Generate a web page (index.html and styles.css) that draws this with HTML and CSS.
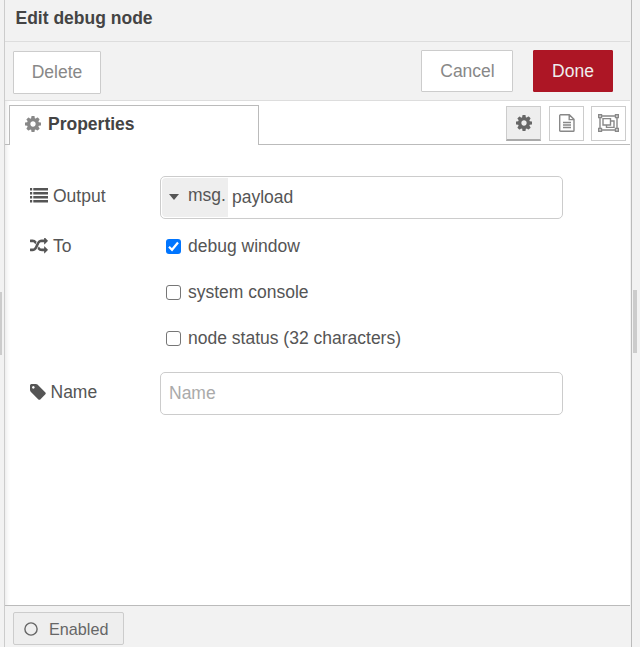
FILE: index.html
```html
<!DOCTYPE html>
<html lang="en">
<head>
<meta charset="utf-8">
<title>Edit debug node</title>
<link rel="stylesheet" href="styles.css">
</head>
<body>
<svg width="0" height="0" class="defs">
  <symbol id="cog" viewBox="128 128 1536 1536"><path d="M1152 896q0-106-75-181t-181-75-181 75-75 181 75 181 181 75 181-75 75-181zm512-109v222q0 12-8 23t-20 13l-185 28q-19 54-39 91 35 50 107 138 10 12 10 25t-9 23q-27 37-99 108t-94 71q-12 0-26-9l-138-108q-44 23-91 38-16 136-29 186-7 28-36 28h-222q-14 0-24.500-8.500t-11.500-21.500l-28-184q-49-16-90-37l-141 107q-10 9-25 9-14 0-25-11-126-114-165-168-7-10-7-23 0-12 8-23 15-21 51-66.500t54-70.500q-27-50-41-99l-183-27q-13-2-21-12.500t-8-23.500v-222q0-12 8-23t19-13l186-28q14-46 39-92-40-57-107-138-10-12-10-24 0-10 9-23 26-36 98.500-107.500t94.500-71.500q13 0 26 10l138 107q44-23 91-38 16-136 29-186 7-28 36-28h222q14 0 24.500 8.500t11.500 21.500l28 184q49 16 90 37l142-107q9-9 24-9 13 0 25 10 129 119 165 170 7 8 7 22 0 12-8 23-15 21-51 66.500t-54 70.500q26 50 41 98l183 28q13 2 21 12.500t8 23.500z"/></symbol>
</svg>
<div class="workspace">
  <div class="gutter gutter-left"><div class="grip"></div></div>
  <div class="tray">
    <div class="title">Edit debug node</div>
    <div class="toolbar">
      <button class="btn btn-delete">Delete</button>
      <button class="btn btn-cancel">Cancel</button>
      <button class="btn btn-done">Done</button>
    </div>
    <div class="tabs">
      <div class="tab"><svg class="tab-icon"><use href="#cog"/></svg>Properties</div>
      <div class="tab-buttons">
        <div class="tab-btn active"><svg width="16" height="16"><use href="#cog"/></svg></div>
        <div class="tab-btn"><svg class="outline" width="16" height="18" viewBox="0 0 16 18"><path d="M1.100.7H10.300L15 5.400V16.400Q15 17.300 14.300 17.300H1.700Q.7 17.300.7 16.400V1.500Q.7.700 1.700.700ZM10.200.8V5.600H15M4 8.500H12M4 11H12M4 13.500H12"/></svg></div>
        <div class="tab-btn"><svg class="outline" width="21" height="18" viewBox="0 0 21 18"><path d="M4 2H17M4 16H17M2 4V14M19 4V14M.7.700H3.500V3.500H.7ZM17.500.700H20.300V3.500H17.500ZM.7 14.500H3.500V17.300H.7ZM17.500 14.500H20.300V17.300H17.500ZM5 4.600H12.500V11H5ZM12.500 7H16V13.400H8.500V11"/></svg></div>
      </div>
    </div>
    <div class="form">
      <div class="row row-output">
        <div class="label"><svg class="icon-list" width="18" height="15" viewBox="0 0 18 15"><path d="M0 0h2.200v2.600H0zM3.300 0H18v2.600H3.300zM0 4h2.200v2.600H0zM3.300 4H18v2.600H3.300zM0 8h2.200v2.600H0zM3.300 8H18v2.600H3.300zM0 12h2.200v2.600H0zM3.300 12H18v2.600H3.300z"/></svg>Output</div>
        <div class="field">
          <div class="type"><span class="caret"></span>msg.</div>
          <div class="value">payload</div>
        </div>
      </div>
      <div class="row row-to">
        <div class="label"><svg class="icon-random" width="18" height="16" viewBox="0 128 1792 1536"><path d="M666 481q-60 92-137 273-22-45-37-72.500t-40.500-63.500-51-56.500-63-35-81.500-14.500h-224q-14 0-23-9t-9-23v-192q0-14 9-23t23-9h224q250 0 410 225zm1126 799q0 14-9 23l-320 320q-9 9-23 9-13 0-22.500-9.500t-9.500-22.500v-192q-32 0-85 .5t-81 1-73-1-71-5-64-10.500-63-18.500-58-28.500-59-40-55-53.500-56-69.500q59-93 136-273 22 45 37 72.500t40.500 63.500 51 56.500 63 35 81.500 14.500h256v-192q0-14 9-23t23-9q12 0 24 10l319 319q9 9 9 23zm0-896q0 14-9 23l-320 320q-9 9-23 9-13 0-22.500-9.500t-9.500-22.500v-192h-256q-48 0-87 15t-69 45-51 61.500-45 77.500q-32 62-78 171-29 66-49.500 111t-54 105-64 100-74 83-90 68.500-106.500 42-128 16.500h-224q-14 0-23-9t-9-23v-192q0-14 9-23t23-9h224q48 0 87-15t69-45 51-61.500 45-77.500q32-62 78-171 29-66 49.500-111t54-105 64-100 74-83 90-68.500 106.500-42 128-16.500h256v-192q0-14 9-23t23-9q12 0 24 10l319 319q9 9 9 23z"/></svg>To</div>
        <div class="checks">
          <label class="check"><span class="box checked"><svg width="15" height="15" viewBox="0 0 15 15"><path d="M3 7.800L6 10.800L12 3.500" fill="none" stroke="#fff" stroke-width="2.200"/></svg></span>debug window</label>
          <label class="check"><span class="box"></span>system console</label>
          <label class="check"><span class="box"></span>node status (32 characters)</label>
        </div>
      </div>
      <div class="row row-name">
        <div class="label"><svg class="icon-tag" width="16" height="16" viewBox="128 128 1536 1536"><path d="M576 448q0-53-37.500-90.500t-90.500-37.500-90.500 37.500-37.500 90.500 37.500 90.500 90.500 37.500 90.500-37.500 37.500-90.500zm1067 576q0 53-37 90l-491 492q-39 37-91 37-53 0-90-37l-715-716q-38-37-64.500-101t-26.500-117v-416q0-52 38-90t90-38h416q53 0 117 26.500t102 64.500l715 714q37 39 37 91z"/></svg>Name</div>
        <div class="field"><div class="placeholder">Name</div></div>
      </div>
    </div>
    <div class="footer">
      <button class="enabled"><svg width="14" height="14" viewBox="0 0 14 14"><circle cx="7" cy="7" r="6.100" fill="none" stroke="#666" stroke-width="1.400"/></svg>Enabled</button>
    </div>
  </div>
  <div class="gutter gutter-right"><div class="grip"></div></div>
</div>
</body>
</html>
```
FILE: styles.css
```css
* { box-sizing: border-box; }

body {
  margin: 0;
  font: 17.5px/24px "Liberation Sans", Arial, sans-serif;
  color: #555;
  background: #f2f2f2;
}

button { font: inherit; padding: 0; }
svg { fill: currentColor; flex: none; }
.outline { fill: none; stroke: #888; stroke-width: 1.4; margin-bottom: 2px; }
.defs { position: absolute; }

.workspace { display: flex; width: 640px; height: 647px; overflow: hidden; }
.gutter { background: #f2f2f2; padding-top: 290px; }
.gutter-left { width: 5px; padding-top: 292px; border-right: 1px solid #ccc; }
.gutter-right { width: 9px; padding-left: 1px; border-left: 1px solid #bbb; }
.grip { width: 4px; height: 63px; background: #ccc; }
.gutter-left .grip { width: 2px; }

.tray {
  flex: 1;
  display: flex;
  flex-direction: column;
  background: #fff;
  border-right: 1px solid #f2f2f2;
  box-shadow: inset 5px 0 5px -4px rgba(0, 0, 0, 0.1);
}

.title {
  height: 42px;
  padding: 6px 0 0 10.5px;
  font-weight: bold;
  color: #444;
  background: #f2f2f2;
  border-bottom: 1px solid #ddd;
}

.toolbar {
  display: flex;
  align-items: flex-start;
  height: 59px;
  padding: 8px 17px 0 8px;
  background: #f2f2f2;
  border-bottom: 1px solid #ddd;
}
.btn { height: 42px; color: #888; background: #fff; border: 1px solid #ccc; border-radius: 1px; }
.btn-delete { width: 88px; height: 43px; margin: 1px auto 0 0; padding-bottom: 2px; }
.btn-cancel { width: 92px; margin-right: 20px; padding-left: 1px; }
.btn-done { width: 80px; color: #eee; background: #ad1625; border-color: #ad1625; }

.tabs {
  display: flex;
  justify-content: space-between;
  align-items: flex-start;
  height: 44px;
  padding: 4px 4px 0;
  border-bottom: 1px solid #bbb;
}
.tab {
  display: flex;
  align-items: center;
  width: 250px;
  height: 40px;
  padding: 0 0 4px 15px;
  font-weight: bold;
  color: #444;
  background: #fff;
  border: 1px solid #bbb;
  border-bottom: 0;
}
.tab-icon { width: 16px; height: 16px; margin-right: 7px; color: #888; }
.tab-buttons { display: flex; gap: 8px; padding-top: 1px; }
.tab-btn {
  display: flex;
  align-items: center;
  justify-content: center;
  width: 35px;
  height: 35px;
  border: 1px solid #ccc;
}
.tab-btn + .tab-btn + .tab-btn { margin-left: -1px; }
.tab-btn.active { color: #666; background: #eee; border-bottom: 2px solid #aaa; }

.form { flex: 1; padding: 31px 0 0 25px; }
.row { display: flex; }
.label { display: flex; align-items: center; width: 130px; height: 40px; }
.icon-list, .icon-random { margin-right: 5px; }
.icon-list { margin-bottom: 1px; }
.icon-tag { margin-right: 4.5px; }
.field {
  display: flex;
  width: 403px;
  height: 43px;
  padding: 1px;
  border: 1px solid #ccc;
  border-radius: 5px;
}
.type {
  display: flex;
  align-items: center;
  width: 66px;
  height: 39px;
  padding: 0 0 5px 7px;
  background: #eee;
  border-radius: 4px 0 0 4px;
}
.caret { border: 5.500px solid transparent; border-top: 6px solid #555; border-bottom: 0; margin: 4px 9px 0 0; }
.value { padding: 7px 0 0 4px; }
.placeholder { padding: 7px 0 0 7px; color: #aaa; }

.row-to { margin-top: 6px; }
.row-to .label { height: 42px; }
.checks { padding: 9px 0 0 6px; }
.check { display: flex; align-items: center; height: 24px; margin-bottom: 22px; }
.box { width: 15px; height: 15px; margin: 1px 7px 0 0; border: 1px solid #767676; border-radius: 3px; }
.box.checked { display: flex; border: 0; background: #0075ff; }

.row-name { margin-top: 0; }

.footer { height: 42px; padding: 6px 8px; background: #f2f2f2; border-top: 1px solid #bbb; }
.enabled {
  display: flex;
  align-items: center;
  width: 111px;
  height: 33px;
  padding: 1px 0 0 10px;
  font-size: 16.2px;
  color: #666;
  background: #eee;
  border: 1px solid #ccc;
  border-radius: 2px;
}
.enabled svg { margin-right: 11px; }
```
